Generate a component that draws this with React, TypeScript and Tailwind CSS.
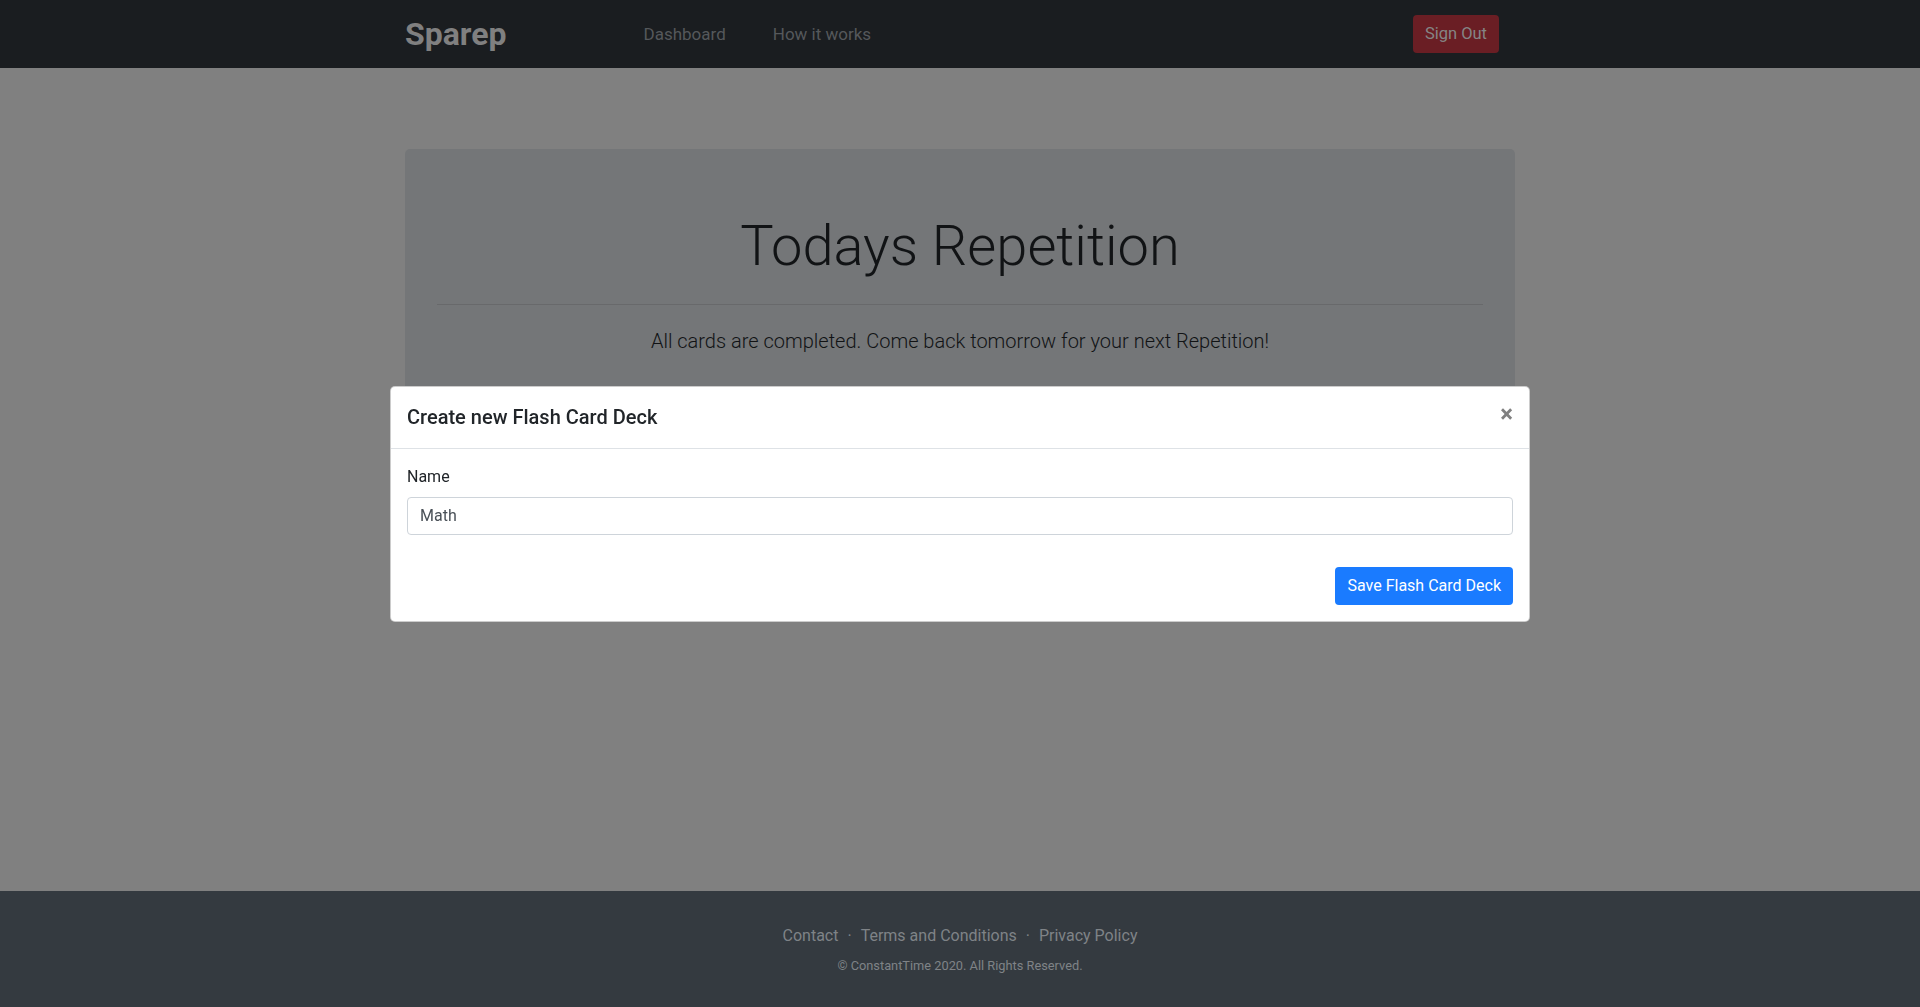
import React, { useState } from 'react';

const font = { fontFamily: 'Roboto, "Noto Sans", sans-serif' };

export default function App() {
  const [name, setName] = useState('Math');

  return (
    <div className="h-screen flex flex-col bg-[#808080]" style={font}>
      {/* navbar (dimmed by the modal backdrop) */}
      <nav className="h-[68px] shrink-0 bg-[#1a1d20]">
        <div className="w-[1140px] mx-auto h-full px-[15px] flex items-center">
          <span className="text-[32px] font-bold text-[#808080] leading-none">Sparep</span>
          <div className="flex items-center gap-[47px] ml-[137px] mt-[2px] text-[17px] text-[#55585b]">
            <span>Dashboard</span>
            <span>How it works</span>
          </div>
          <button className="ml-auto mr-4 h-[38px] px-3 rounded-[4px] bg-[#6a1e24] text-[16.5px] text-[#858585]">
            Sign Out
          </button>
        </div>
      </nav>

      {/* main */}
      <main className="flex-1">
        <div className="w-[1110px] mx-auto mt-[81px] rounded-[5px] bg-[#747678] px-8 pt-16 pb-16 text-center">
          <h1 className="text-[56px] font-light leading-[1.2] mb-2 text-[#111315]">Todays Repetition</h1>
          <hr className="mt-[24px] border-0 border-t border-[#68696b]" />
          <p className="mt-[21px] text-[20px] font-light leading-[1.5] text-[#111315]">
            All cards are completed. Come back tomorrow for your next Repetition!
          </p>
        </div>
      </main>

      {/* footer */}
      <footer className="h-[116px] shrink-0 bg-[#343a40] pt-[33px] text-center text-[#7f8387]">
        <div className="text-[16px] leading-[24px]">
          <span>Contact</span>
          <span className="mx-[9px]">·</span>
          <span>Terms and Conditions</span>
          <span className="mx-[9px]">·</span>
          <span>Privacy Policy</span>
        </div>
        <div className="mt-2 text-[12.8px] leading-[19.2px]">© ConstantTime 2020. All Rights Reserved.</div>
      </footer>

      {/* modal */}
      <div className="fixed inset-0 flex items-center justify-center">
        <div className="w-[1140px] bg-white border border-black/20 rounded-[5px] flex flex-col">
          <div className="h-[62px] px-4 flex items-center justify-between border-b border-[#dee2e6]">
            <h5 className="text-[20px] font-medium leading-[24px] text-[#212529]">Create new Flash Card Deck</h5>
            <button className="-mt-[6px] text-[24px] font-bold leading-none text-[#808080]">×</button>
          </div>
          <div className="p-4 flex flex-col">
            <label className="text-[16px] leading-[24px] mb-2 text-[#212529]">Name</label>
            <input
              value={name}
              onChange={(e) => setName(e.target.value)}
              className="h-[38px] px-3 border border-[#ced4da] rounded-[4px] text-[16px] text-[#495057] outline-none"
              style={font}
            />
            <button className="self-end mt-8 h-[38px] px-3 rounded-[4px] bg-[#1a7bff] text-white text-[16px]">
              Save Flash Card Deck
            </button>
          </div>
        </div>
      </div>
    </div>
  );
}
